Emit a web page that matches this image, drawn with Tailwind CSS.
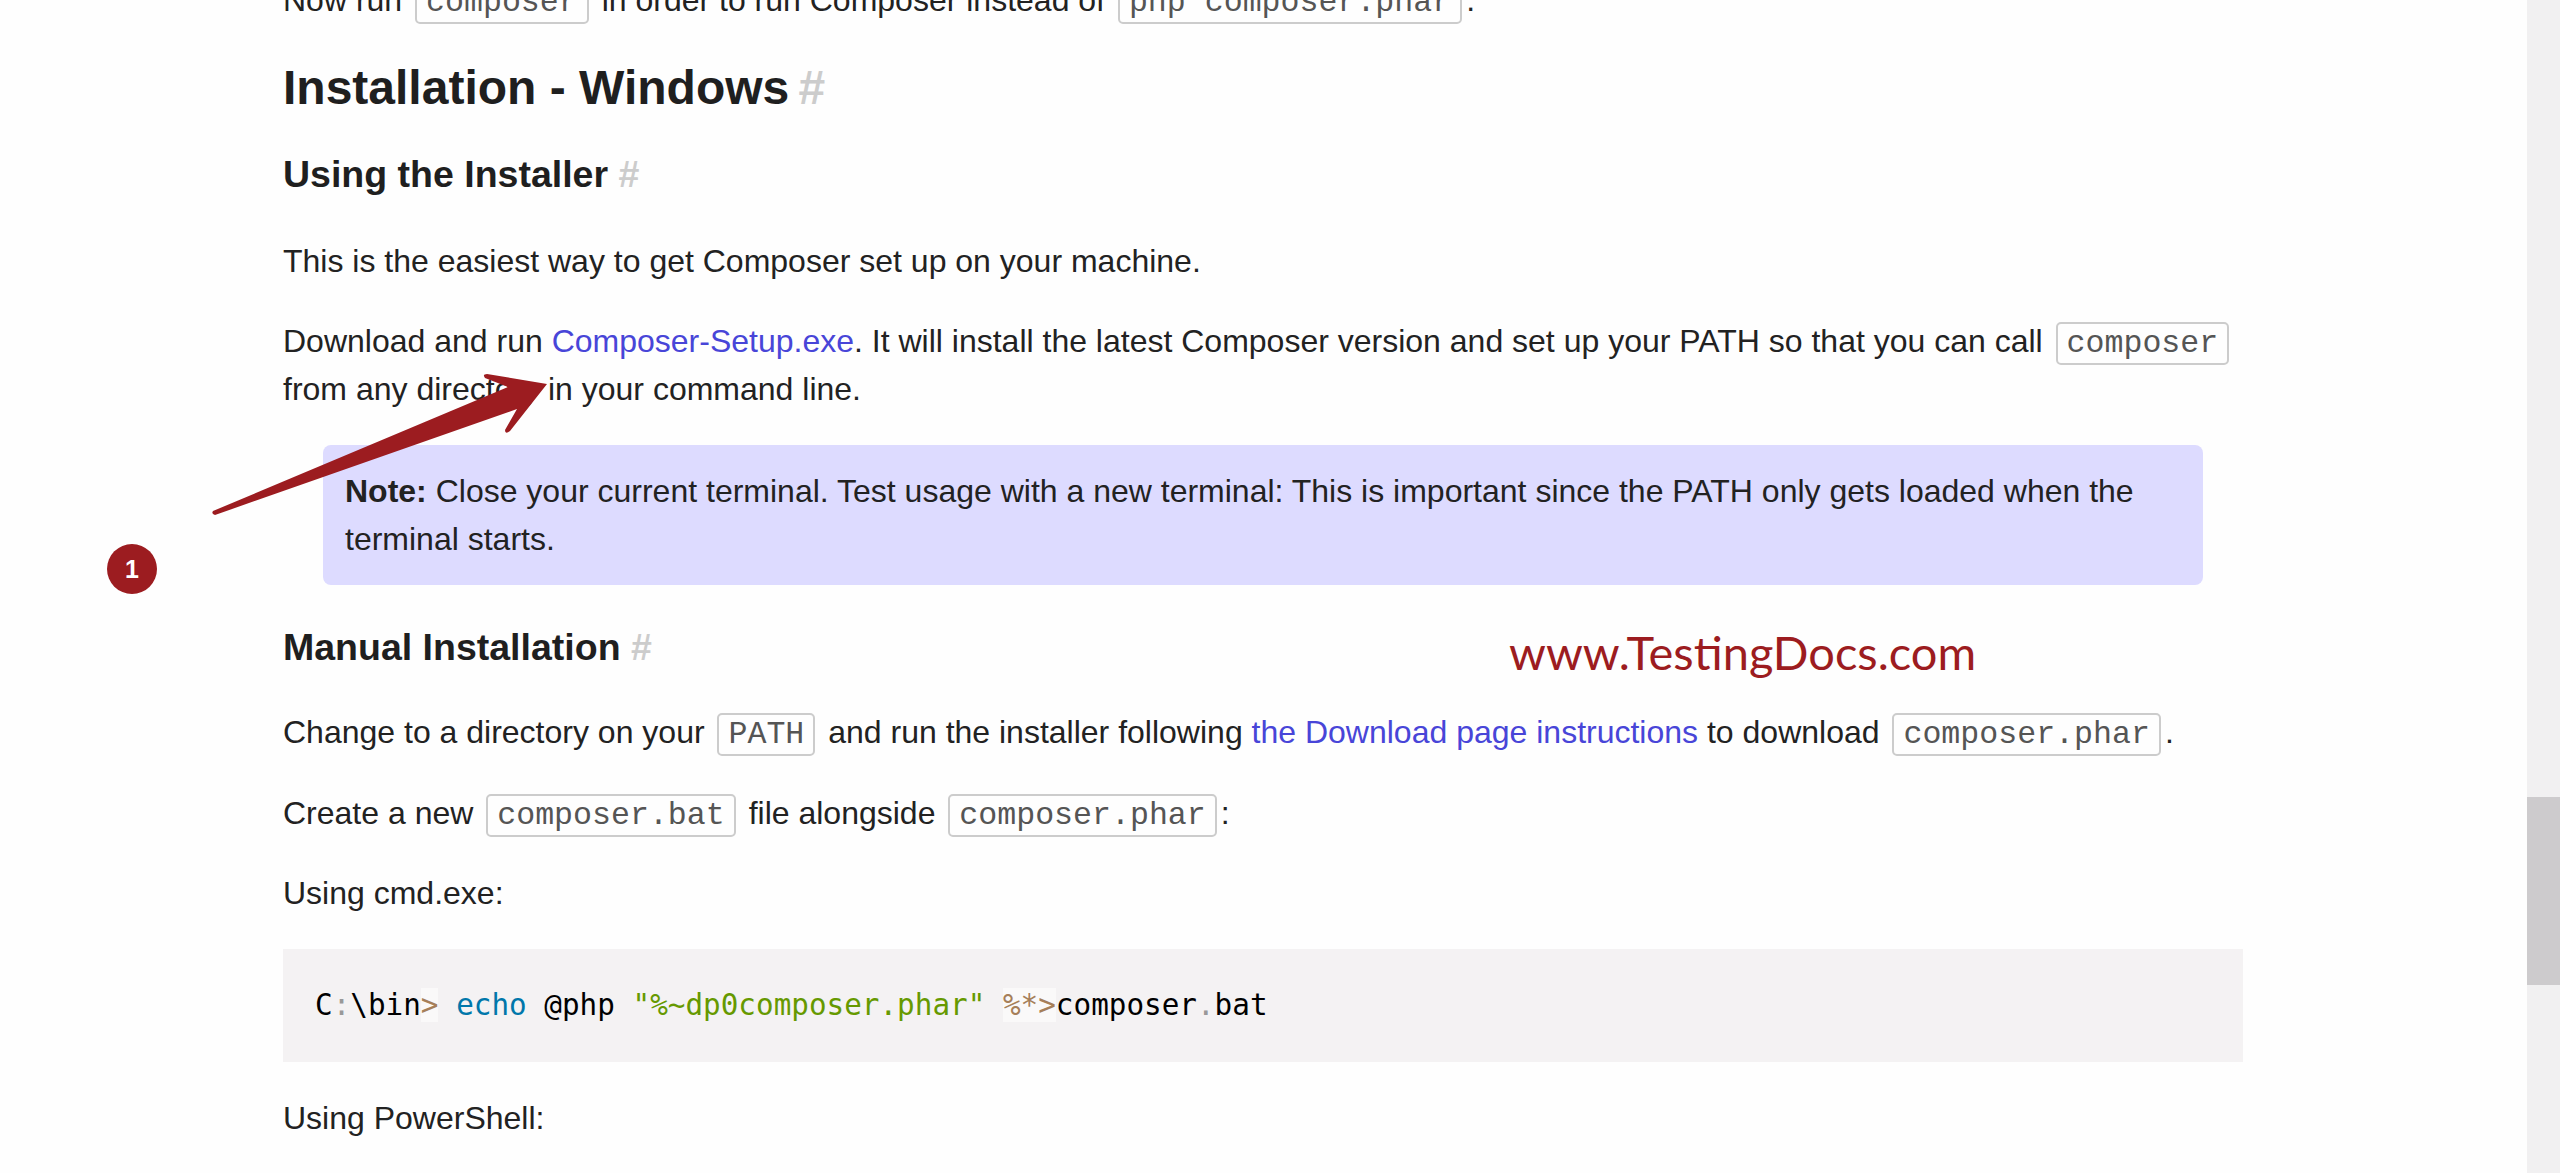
<!DOCTYPE html>
<html lang="en">
<head>
  <meta charset="UTF-8" />
  <title>Composer Installation</title>
  <script src="https://cdn.jsdelivr.net/npm/@tailwindcss/browser@4"></script>
</head>
<body class="bg-[#fefefe] h-screen overflow-hidden relative flex font-['Liberation_Sans',Arial,sans-serif] text-[32px] leading-[48px] text-[#222222]">

  <!-- Page content -->
  <main class="flex-1 min-w-0 pl-[283px] pr-[284px] -mt-[24px]">
    <p class="mb-[34px]">Now run <code class="font-['Liberation_Mono',monospace] text-[31.6px] leading-none text-[#555555] px-[9px] py-[2px] mx-[4px] border-2 border-[#cccccc] rounded-[5px]">composer</code> in order to run Composer instead of <code class="font-['Liberation_Mono',monospace] text-[31.6px] leading-none text-[#555555] px-[9px] py-[2px] mx-[4px] border-2 border-[#cccccc] rounded-[5px]">php composer.phar</code>.</p>

    <h2 class="font-bold text-[48px] leading-[60px] text-[#1f1f1f] mb-[32px]">Installation - Windows <span class="text-[#cccccc] -ml-[4px]">#</span></h2>
    <h3 class="font-bold text-[37.5px] leading-[48px] text-[#1f1f1f] mb-[39px]">Using the Installer <span class="text-[#cccccc]">#</span></h3>

    <p class="mb-[32px]">This is the easiest way to get Composer set up on your machine.</p>
    <p class="mb-[32px]">Download and run <a class="text-[#4845d8]">Composer-Setup.exe</a>. It will install the latest Composer version and set up your PATH so that you can call <code class="font-['Liberation_Mono',monospace] text-[31.6px] leading-none text-[#555555] px-[9px] py-[2px] mx-[4px] border-2 border-[#cccccc] rounded-[5px]">composer</code> from any directory in your command line.</p>

    <div class="mx-[40px] mb-[38px] px-[22px] py-[22px] bg-[#dddbff] rounded-[8px]">
      <p><strong>Note:</strong> Close your current terminal. Test usage with a new terminal: This is important since the PATH only gets loaded when the terminal starts.</p>
    </div>

    <h3 class="font-bold text-[37.5px] leading-[48px] text-[#1f1f1f] mb-[37px]">Manual Installation <span class="text-[#cccccc]">#</span></h3>

    <p class="mb-[33px]">Change to a directory on your <code class="font-['Liberation_Mono',monospace] text-[31.6px] leading-none text-[#555555] px-[9px] py-[2px] mx-[4px] border-2 border-[#cccccc] rounded-[5px]">PATH</code> and run the installer following <a class="text-[#4845d8]">the Download page instructions</a> to download <code class="font-['Liberation_Mono',monospace] text-[31.6px] leading-none text-[#555555] px-[9px] py-[2px] mx-[4px] border-2 border-[#cccccc] rounded-[5px]">composer.phar</code>.</p>
    <p class="mb-[32px]">Create a new <code class="font-['Liberation_Mono',monospace] text-[31.6px] leading-none text-[#555555] px-[9px] py-[2px] mx-[4px] border-2 border-[#cccccc] rounded-[5px]">composer.bat</code> file alongside <code class="font-['Liberation_Mono',monospace] text-[31.6px] leading-none text-[#555555] px-[9px] py-[2px] mx-[4px] border-2 border-[#cccccc] rounded-[5px]">composer.phar</code>:</p>
    <p class="mb-[32px]">Using cmd.exe:</p>

    <pre class="mb-[32px] px-[32px] py-[32px] bg-[#f4f2f3] font-['DejaVu_Sans_Mono',monospace] text-[29.3px] leading-[49px] text-black">C<span class="text-[#999999]">:</span>\bin<span class="text-[#a67f59] bg-white/50">&gt;</span> <span class="text-[#0077aa]">echo</span> @php <span class="text-[#669900]">"%~dp0composer.phar"</span> <span class="text-[#a67f59] bg-white/50">%*&gt;</span>composer<span class="text-[#999999]">.</span>bat</pre>

    <p>Using PowerShell:</p>
  </main>

  <!-- Scrollbar -->
  <aside class="w-[33px] shrink-0 h-full bg-[#f1f0f1] pt-[797px]">
    <div class="h-[188px] bg-[#cdcbcd]"></div>
  </aside>

  <!-- Annotation overlay -->
  <svg class="absolute left-0 top-0 pointer-events-none" width="700" height="600" viewBox="0 0 700 600">
    <path d="M213 511 L508 387 L485 378 Q482 374 487 374 L547 384 L510 431 Q505 435 505 430 L517 409 L215 515 Q211 514 213 511 Z" fill="#9c1c20" />
  </svg>
  <div class="absolute left-[107px] top-[544px] w-[50px] h-[50px] rounded-full bg-[#9c1c20] text-white font-bold text-[25px] leading-[50px] text-center">1</div>
  <div class="absolute left-[1509px] top-[620px] font-['Lato',sans-serif] text-[47px] leading-[64px] text-[#9c1c20] whitespace-nowrap">www.TestingDocs.com</div>
</body>
</html>
